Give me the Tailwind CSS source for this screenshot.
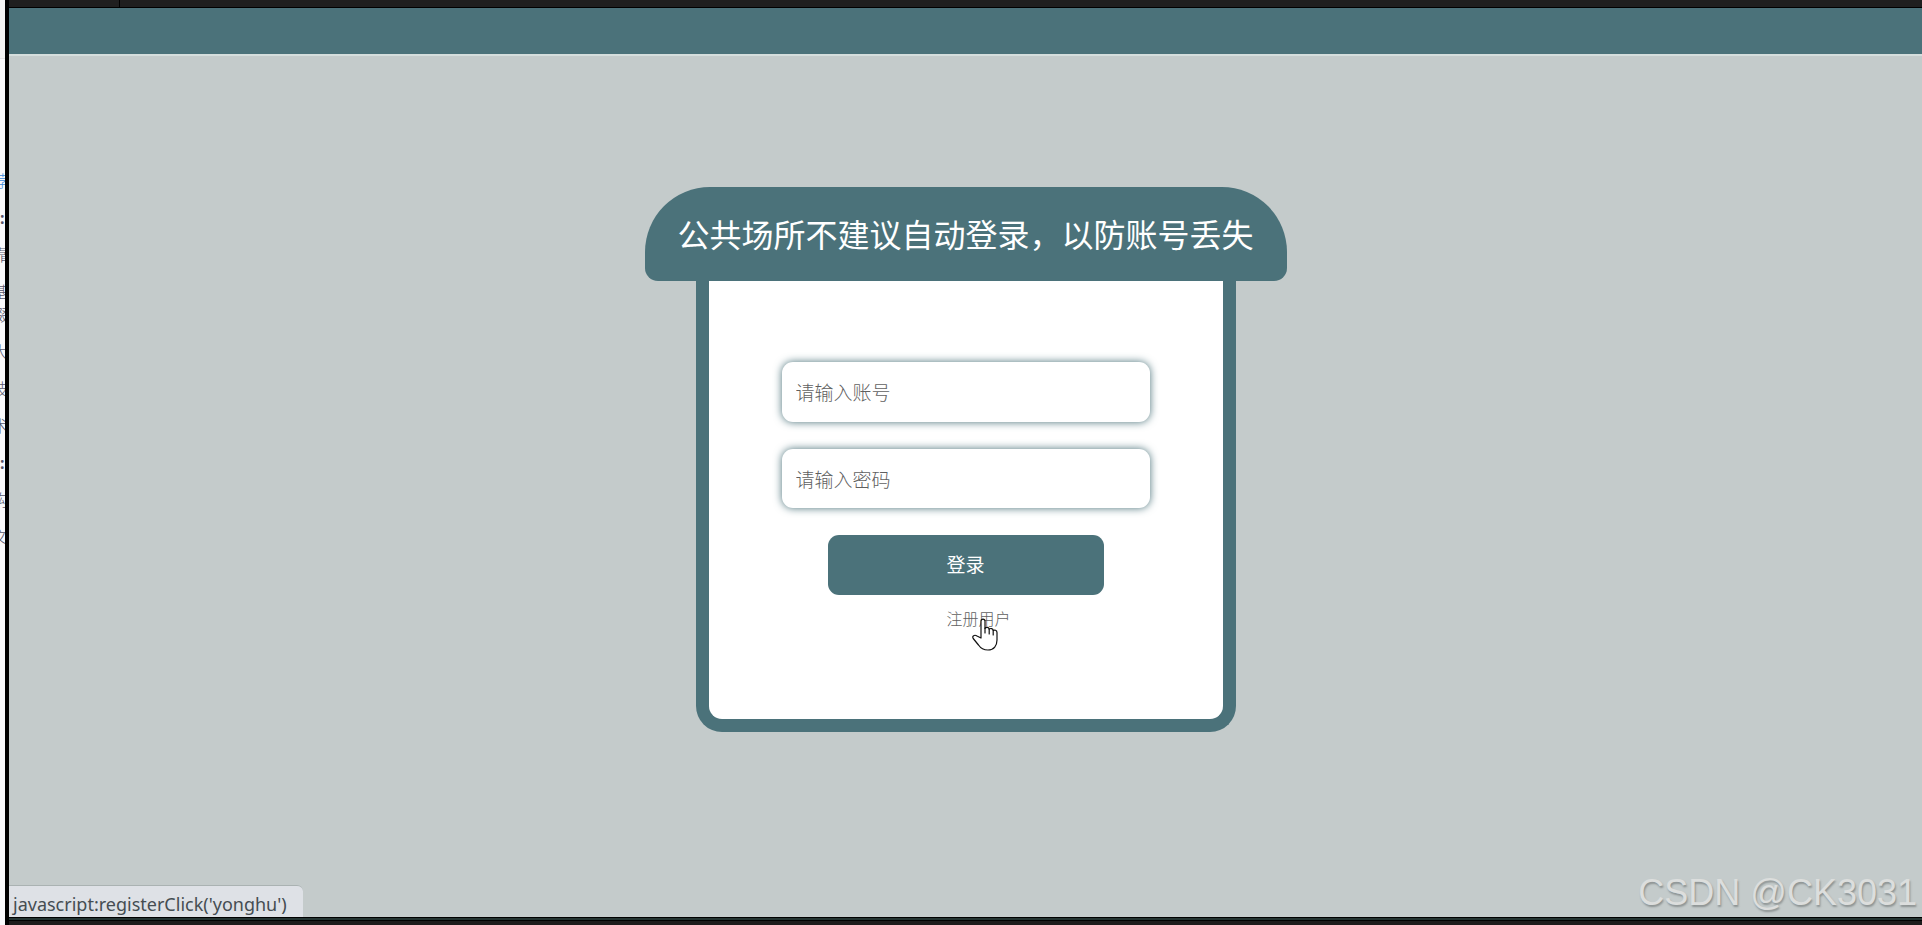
<!DOCTYPE html>
<html lang="zh-CN">
  <head>
    <meta charset="UTF-8" />
    <meta name="viewport" content="width=device-width, initial-scale=1.0" />
    <title>登录</title>
    <script src="https://cdn.jsdelivr.net/npm/@tailwindcss/browser@4"></script>
  </head>
  <body class="flex h-screen min-h-[800px] bg-black font-['Noto_Sans','Noto_Sans_CJK_SC',sans-serif]">

    <!-- Window behind -->
    <aside class="w-[5px] shrink-0 overflow-hidden bg-[#fafafc] text-base leading-[37px] font-light text-[#55556b]">
      <div class="h-[58px] bg-[#f4f4f4]"></div>
      <div class="h-[105px] border-t border-[#e5e5e5]"></div>
      <div class="-ml-2 w-4">
        <p class="text-[#3b8ad8]">荐</p>
        <p class="pl-2 font-bold">:</p>
        <p>靠</p>
        <p class="py-[7px] leading-[23px]">基<br />缀</p>
        <p>大</p>
        <p>技</p>
        <p>术</p>
        <p class="pl-2 font-bold">:</p>
        <p>构</p>
        <p>文</p>
      </div>
    </aside>

    <!-- Browser window -->
    <div class="ml-1 flex min-w-0 flex-1 flex-col">
      <div class="flex h-[7px] bg-[#1f1f1f]">
        <div class="w-[111px] border-r border-black"></div>
      </div>

      <header class="mt-px h-12 border-b-2 border-[#d5dedd] bg-[#4b727a]"></header>

      <main class="relative flex flex-1 flex-col items-center bg-[#c4cbcb] pt-[131px]">
        <h1 class="flex h-[94px] w-[642px] items-center justify-center rounded-t-[65px] rounded-b-[13px] bg-[#4b727a] pt-[2px] text-[32px] text-white">公共场所不建议自动登录，以防账号丢失</h1>

        <!-- Login form -->
        <form class="flex h-[451px] w-[540px] flex-col items-center gap-[27px] rounded-b-[26px] border-x-[13px] border-b-[13px] border-[#4b727a] bg-white pt-[81px]">
          <input type="text" aria-label="账号" placeholder="请输入账号" class="h-[60px] w-[368px] rounded-[11px] bg-white px-[14px] pt-[2px] text-[19px] font-light shadow-[0_0_8px_#4b727a] outline-none placeholder:text-[#5f5f5f]" />
          <input type="password" aria-label="密码" placeholder="请输入密码" class="h-[59px] w-[368px] rounded-[11px] bg-white px-[14px] pt-[2px] text-[19px] font-light shadow-[0_0_8px_#4b727a] outline-none placeholder:text-[#5f5f5f]" />
          <div class="flex flex-col">
            <button type="button" class="h-[60px] w-[276px] rounded-[11px] bg-[#4b727a] text-[19px] text-white">登录</button>
            <div class="relative mt-3 ml-[119px] w-16">
              <a href="javascript:registerClick('yonghu')" class="block text-base font-light whitespace-nowrap text-[#5f5f5f]">注册用户</a>
              <svg class="absolute top-[11px] left-[25px]" width="26" height="33" viewBox="0 0 26 33" fill="#fff" stroke="#111" stroke-width="1.2" stroke-linejoin="round" stroke-linecap="round">
                <path d="M9 20V3.2C9 .3 13 .3 13 3.2V10.500C14 8.800 17 9 17.200 11.200C18.500 9.900 21 10.500 21.200 12.500C22.500 11.500 25 12.200 25 14.500V22C25 27.500 22 32 16 32C11 32 8.500 30 6.500 27L1.200 20.500C-.2 18 2.500 16.300 5 18Z" />
                <path d="M13 10V15M17.200 11V16M21.200 12.500V17" />
              </svg>
            </div>
          </div>
        </form>

        <!-- Link target shown by the browser -->
        <div class="absolute bottom-0 left-0 h-8 rounded-tr-[6px] border-t border-[#aab2b2] bg-[#dee1e6] pr-4 pl-1 text-[18px] leading-[36px] text-[#454d52]">javascript:registerClick('yonghu')</div>

        <div class="absolute right-[5px] bottom-[3px] font-['Liberation_Sans',sans-serif] text-[36px] leading-[42px] text-[#dcdedd] [text-shadow:1px_2px_2px_#8b9191]">CSDN @CK3031</div>
      </main>

      <footer class="mt-px">
        <div class="h-[2px] bg-[#253533]"></div>
        <div class="mt-px h-1 bg-[#1d1b1b]"></div>
      </footer>
    </div>

  </body>
</html>
